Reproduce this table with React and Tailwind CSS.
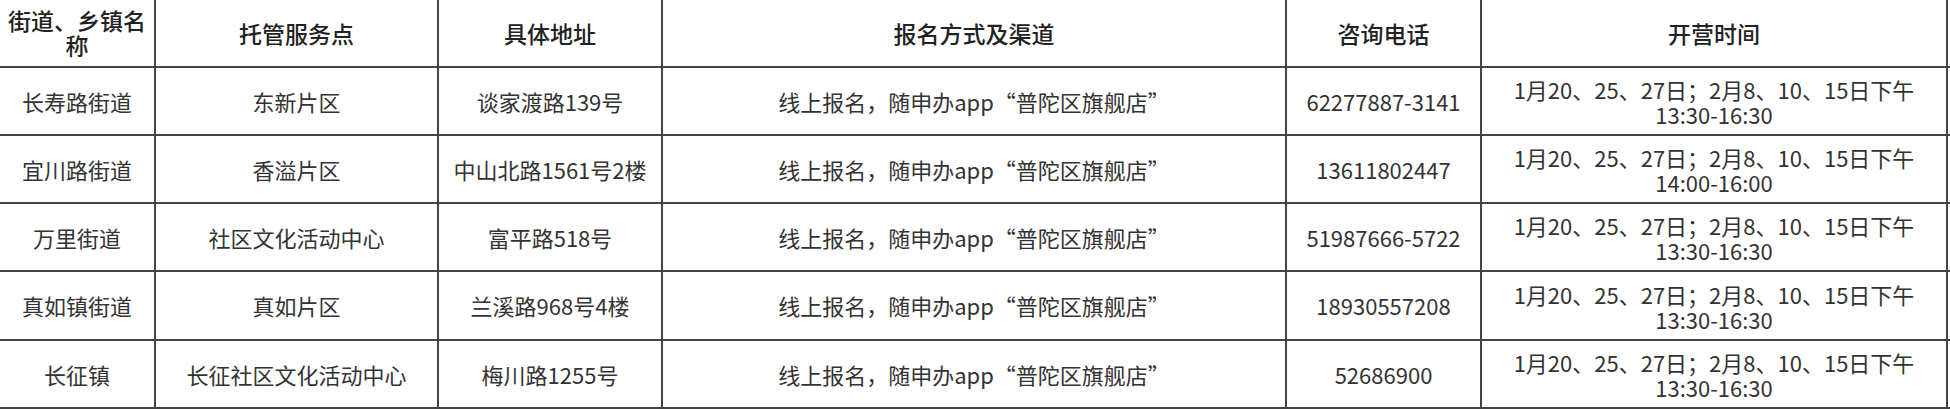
import React from "react";

const rows = [
  { street: "长寿路街道", point: "东新片区", addr: "谈家渡路139号", phone: "62277887-3141", time: "13:30-16:30", h: "h-[68px]" },
  { street: "宜川路街道", point: "香溢片区", addr: "中山北路1561号2楼", phone: "13611802447", time: "14:00-16:00", h: "h-[68px]" },
  { street: "万里街道", point: "社区文化活动中心", addr: "富平路518号", phone: "51987666-5722", time: "13:30-16:30", h: "h-[68px]" },
  { street: "真如镇街道", point: "真如片区", addr: "兰溪路968号4楼", phone: "18930557208", time: "13:30-16:30", h: "h-[69px]" },
  { street: "长征镇", point: "长征社区文化活动中心", addr: "梅川路1255号", phone: "52686900", time: "13:30-16:30", h: "h-[68px]" },
];

const cols = ["w-[156px]", "w-[283px]", "w-[224px]", "w-[624px]", "w-[195px]", "w-[466px]"];

const Cell = ({ w, children, className = "" }) => (
  <div
    className={`${w} shrink-0 flex flex-col items-center justify-center text-center border-r-2 border-[#444] leading-[25px] ${className}`}
  >
    {children}
  </div>
);

export default function App() {
  return (
    <div
      className="w-[1950px] h-[410px] bg-white text-[#333] overflow-hidden"
      style={{ fontFamily: '"Noto Sans CJK SC", "Noto Sans", sans-serif' }}
    >
      {/* header */}
      <div className="flex h-[68px] border-b-2 border-[#444] text-[23px] font-medium text-[#222]">
        <Cell w={cols[0]} className="px-1">
          <span>街道、乡镇名</span>
          <span>称</span>
        </Cell>
        <Cell w={cols[1]}>托管服务点</Cell>
        <Cell w={cols[2]}>具体地址</Cell>
        <Cell w={cols[3]}>报名方式及渠道</Cell>
        <Cell w={cols[4]}>咨询电话</Cell>
        <Cell w={cols[5]}>开营时间</Cell>
      </div>

      {rows.map((r) => (
        <div key={r.street} className={`flex ${r.h} border-b-2 border-[#444] text-[22px]`}>
          <Cell w={cols[0]}>{r.street}</Cell>
          <Cell w={cols[1]}>{r.point}</Cell>
          <Cell w={cols[2]}>{r.addr}</Cell>
          <Cell w={cols[3]}>线上报名，随申办app“普陀区旗舰店”</Cell>
          <Cell w={cols[4]}>{r.phone}</Cell>
          <Cell w={cols[5]} className="pt-[2px]">
            <span>1月20、25、27日；2月8、10、15日下午</span>
            <span>{r.time}</span>
          </Cell>
        </div>
      ))}
    </div>
  );
}
